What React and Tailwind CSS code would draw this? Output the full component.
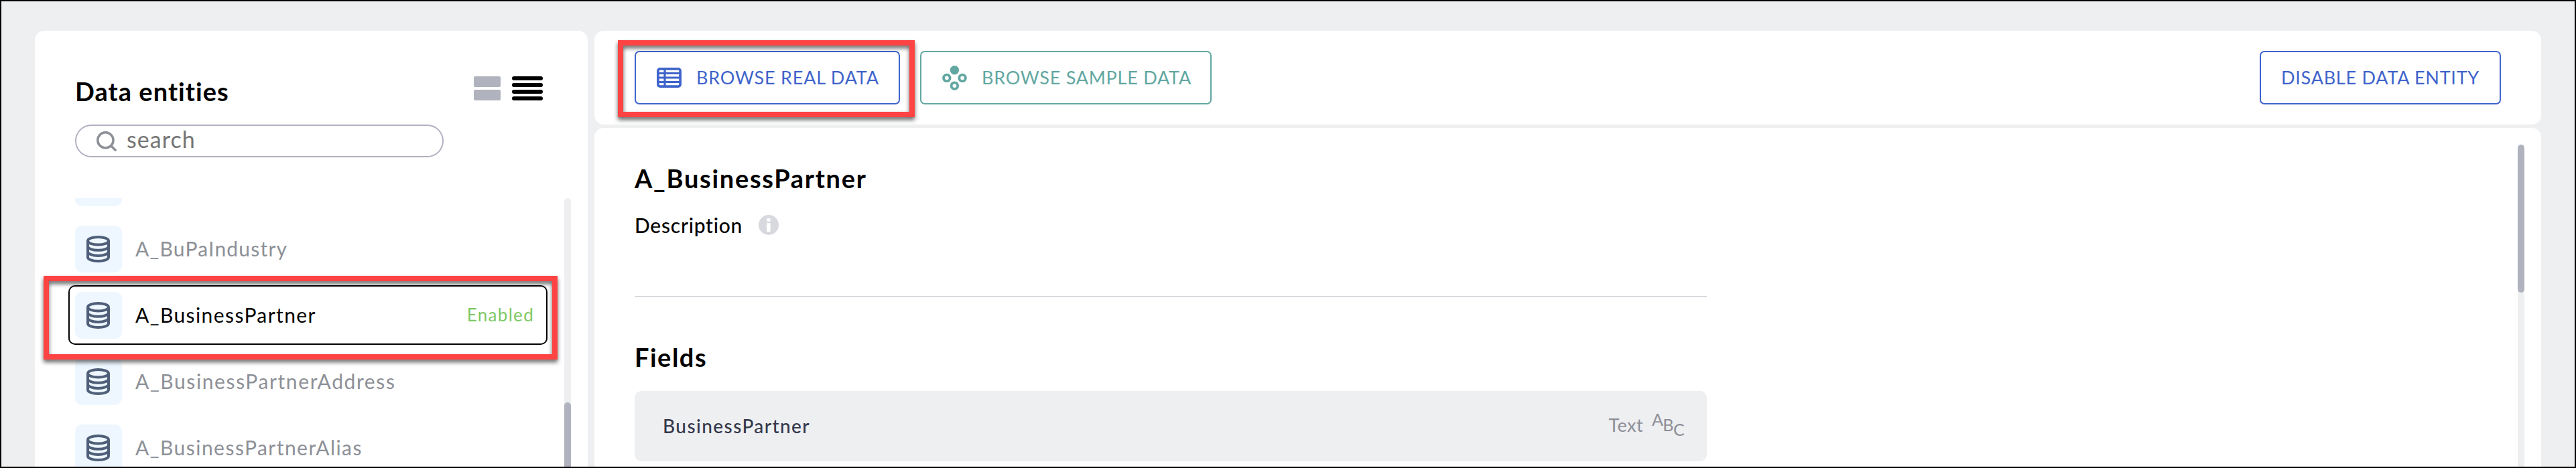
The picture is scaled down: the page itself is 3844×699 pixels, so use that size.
import React from "react";

function DatabaseIcon() {
  return (
    <svg width="35" height="40" viewBox="0 0 35 40" fill="none" stroke="#505f79" strokeWidth="4">
      <ellipse cx="17.5" cy="7.8" rx="15.5" ry="5.8" />
      <path d="M2 7.8V32.2C2 35.4 8.9 38 17.5 38S33 35.4 33 32.2V7.8" />
      <path d="M2 15.9C2 19.1 8.9 21.8 17.5 21.8S33 19.1 33 15.9" />
      <path d="M2 24C2 27.2 8.9 29.9 17.5 29.9S33 27.2 33 24" />
    </svg>
  );
}

function TableIcon() {
  return (
    <svg width="37" height="30" viewBox="0 0 37 30" fill="none" stroke="#3f64cb">
      <rect x="1.9" y="1.9" width="33.2" height="26.2" rx="3" strokeWidth="3.8" />
      <path d="M12 2V28M2 8.5H35M2 15H35M2 21.5H35" strokeWidth="3.2" />
    </svg>
  );
}

function SampleIcon() {
  return (
    <svg width="37" height="37" viewBox="0 0 37 37" fill="none" stroke="#62a7a1" strokeWidth="3.8">
      <circle cx="18.4" cy="6.7" r="6.7" fill="#62a7a1" stroke="none" />
      <circle cx="6.8" cy="18.4" r="4.8" />
      <circle cx="30.1" cy="18.4" r="4.8" />
      <circle cx="18.4" cy="30.1" r="4.8" />
    </svg>
  );
}

function SearchIcon() {
  return (
    <svg width="32" height="32" viewBox="0 0 32 32" fill="none" stroke="#8d9097" strokeWidth="3.5" strokeLinecap="round">
      <circle cx="14.4" cy="14.4" r="11.6" />
      <path d="M23 23L29.2 29.2" />
    </svg>
  );
}

function InfoIcon() {
  return (
    <svg width="30" height="30" viewBox="0 0 30 30">
      <circle cx="15" cy="15" r="15" fill="#d8d9de" />
      <path d="M12.3 5.3H17.6V9.8H12.3ZM12.3 12.3H17.6V25H12.3Z" fill="#fff" />
    </svg>
  );
}

const entities = [
  { name: "", spacing: "" },
  { name: "A_BuPaIndustry", spacing: "tracking-[1.2px]" },
  { name: "A_BusinessPartner", spacing: "tracking-[1.42px]", enabled: true },
  { name: "A_BusinessPartnerAddress", spacing: "tracking-[1.61px]" },
  { name: "A_BusinessPartnerAlias", spacing: "tracking-[1.47px]" },
];

function EntityRow({ name, spacing, enabled }) {
  return (
    <li
      className={
        "flex h-[89px] w-[715px] shrink-0 items-start rounded-[10px] border-2 pt-2 pl-2 " +
        (enabled ? "border-black text-black" : "border-transparent text-[#8d9097]")
      }
    >
      <div className="flex size-[70px] items-center rounded-[10px] bg-[#eef7ff] pl-[17px]">
        <DatabaseIcon />
      </div>
      <span className={"ml-5 pt-[14px] text-[30px] leading-[40px] " + spacing}>{name}</span>
      {enabled && (
        <span className="mr-[18px] ml-auto pt-[14px] text-[26px] leading-[40px] tracking-[1.3px] text-[#7ec865]">
          Enabled
        </span>
      )}
    </li>
  );
}

function Sidebar() {
  return (
    <aside className="flex w-[825px] flex-col rounded-t-[14px] bg-white pt-[68px] pl-[60px]">
      <div className="flex h-[41px] items-start justify-between pr-[67px]">
        <h1 className="pt-0.5 text-[38px] leading-[40px] font-bold tracking-[1.05px]">Data entities</h1>
        <div className="flex gap-[17px]">
          <div className="flex w-10 flex-col gap-1">
            <span className="h-4 rounded-[2px] bg-[#b0b2be]" />
            <span className="h-4 rounded-[2px] bg-[#b0b2be]" />
          </div>
          <div className="flex w-[46px] flex-col gap-1">
            <span className="h-1.5 rounded-[3px] bg-black" />
            <span className="h-1.5 rounded-[3px] bg-black" />
            <span className="h-1.5 rounded-[3px] bg-black" />
            <span className="h-1.5 rounded-[3px] bg-black" />
          </div>
        </div>
      </div>
      <div className="mt-[31px] flex h-[49px] w-[550px] shrink-0 items-center gap-[14px] rounded-full border-2 border-[#b0b2c0] pl-[29px] text-[34px] leading-[38px] tracking-[1.05px] text-[#757575]">
        <SearchIcon />
        <span className="pb-[5px]">search</span>
      </div>
      <div className="mt-[61px] ml-[-10px] flex min-h-0 flex-1 overflow-hidden">
        <ul className="mt-[-68px] flex flex-col gap-2.5">
          {entities.map((entity) => (
            <EntityRow key={entity.name} {...entity} />
          ))}
        </ul>
        <div className="ml-[25px] w-2.5 self-stretch rounded-t-full bg-[#eeeff1] pt-[305px]">
          <div className="h-full rounded-t-full bg-[#b0b2be]" />
        </div>
      </div>
    </aside>
  );
}

function Toolbar() {
  const button =
    "flex h-20 items-center rounded-[7px] border-2 text-[27px] leading-[32px] whitespace-nowrap ";
  return (
    <header className="flex h-[140px] items-center gap-[30px] rounded-[14px] bg-white px-[60px]">
      <button className={button + "w-[396px] border-[#3f64cb] pl-[31px] text-[#3f64cb]"}>
        <TableIcon />
        <span className="ml-[22px] pb-px tracking-[0.8px]">BROWSE REAL DATA</span>
      </button>
      <button className={button + "w-[435px] border-[#62a7a1] pl-[31px] text-[#62a7a1]"}>
        <SampleIcon />
        <span className="ml-[22px] pb-px tracking-[0.75px]">BROWSE SAMPLE DATA</span>
      </button>
      <button className={button + "ml-auto w-[360px] border-[#3f64cb] pl-[30px] text-[#3f64cb]"}>
        <span className="pb-px tracking-[0.75px]">DISABLE DATA ENTITY</span>
      </button>
    </header>
  );
}

function Details() {
  return (
    <section className="flex min-h-0 flex-1 justify-between overflow-hidden rounded-t-[14px] bg-white pr-[25px] pl-[60px]">
      <div className="w-[1600px]">
        <h2 className="mt-[55px] text-[38px] leading-[40px] font-bold tracking-[1.7px]">A_BusinessPartner</h2>
        <div className="mt-[35px] flex items-center">
          <span className="w-[185px] text-[30px] leading-[30px] font-medium tracking-[0.75px]">Description</span>
          <InfoIcon />
        </div>
        <div className="mt-[91px] h-0.5 bg-[#d9d9e0]" />
        <h2 className="mt-[69px] text-[38px] leading-[40px] font-bold tracking-[1.5px]">Fields</h2>
        <div className="mt-[31px] flex h-[105px] items-center justify-between rounded-[10px] bg-[#eeeff1] pr-[34px] pl-[42px]">
          <span className="pb-px text-[28px] font-medium tracking-[1.43px] text-[#34384b]">BusinessPartner</span>
          <div className="flex items-center gap-[13px] pb-[3px] text-[27px] text-[#8d8e97]">
            <span className="tracking-[0.4px]">Text</span>
            <span className="flex text-[25px] tracking-[-0.6px]">
              <span className="-translate-y-2">A</span>
              <span>B</span>
              <span className="translate-y-[7px]">C</span>
            </span>
          </div>
        </div>
      </div>
      <div className="mt-[25px] w-2.5 rounded-t-full bg-[#eeeff1]">
        <div className="h-[221px] rounded-full bg-[#b0b2be]" />
      </div>
    </section>
  );
}

export default function App() {
  return (
    <div className="relative h-[699px] w-[3844px] overflow-hidden border-2 border-black bg-[#eeeff1] font-['Lato',sans-serif] text-black">
      <div className="flex h-full gap-2.5 pt-11 pr-[50px] pl-[50px]">
        <Sidebar />
        <main className="flex min-w-0 flex-1 flex-col gap-[5px]">
          <Toolbar />
          <Details />
        </main>
      </div>
      <div className="absolute top-[410px] left-[63px] h-[125px] w-[767px] border-8 border-[#fd4343] drop-shadow-[0_4px_3px_rgba(0,0,0,0.6)]" />
      <div className="absolute top-[58px] left-[920px] h-[115px] w-[443px] border-8 border-[#fd4343] drop-shadow-[0_4px_3px_rgba(0,0,0,0.6)]" />
    </div>
  );
}
